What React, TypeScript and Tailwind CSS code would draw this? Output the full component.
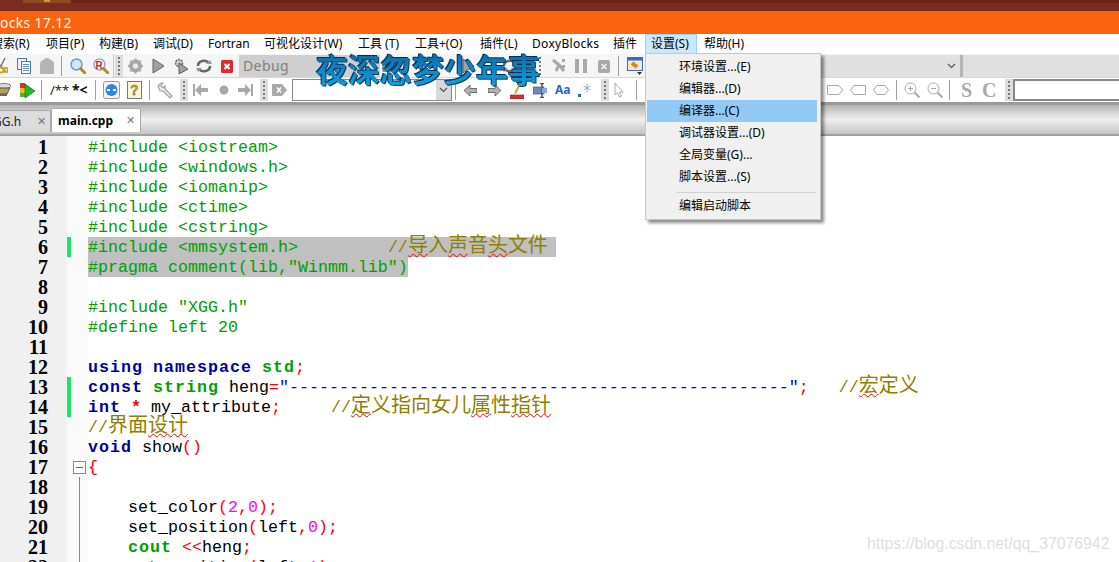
import React from "react";

const UI = "font-['Noto_Sans','Noto_Sans_CJK_SC',sans-serif]";
const CODE = "font-['Liberation_Mono','Noto_Sans_CJK_SC',monospace]";
const CJK = "font-['Noto_Sans_CJK_SC',sans-serif]";

type P = { children?: React.ReactNode };
const G = ({ children }: P) => <span className="text-[#00a000]">{children}</span>;
const K = ({ children }: P) => <b className="font-bold tracking-[1px] text-[#00009f]">{children}</b>;
const T = ({ children }: P) => <b className="font-bold tracking-[1px] text-[#00a000]">{children}</b>;
const R = ({ children }: P) => <span className="text-[#ff0000]">{children}</span>;
const N = ({ children }: P) => <span className="text-[#ff00ff]">{children}</span>;
const S = ({ children }: P) => <span className="text-[#0000ff]">{children}</span>;
const C = ({ children }: P) => <span className="text-[#8f8000]">{children}</span>;
const H = ({ children }: P) => <span className={`${CJK} text-[20px] leading-[0]`}>{children}</span>;
const W = ({ children }: P) => (
  <span className={`${CJK} text-[20px] leading-[0] underline decoration-wavy decoration-[#ff0000] decoration-1 underline-offset-1`}>{children}</span>
);

const lines: React.ReactNode[] = [
  <G>#include &lt;iostream&gt;</G>,
  <G>#include &lt;windows.h&gt;</G>,
  <G>#include &lt;iomanip&gt;</G>,
  <G>#include &lt;ctime&gt;</G>,
  <G>#include &lt;cstring&gt;</G>,
  <span className="inline-block h-[20px] w-[468px] bg-[#c0c0c0] align-top">
    <G>#include &lt;mmsystem.h&gt;</G>{"         "}
    <C>//<W>导</W><H>入</H><W>声</W><H>音</H><W>头</W><H>文件</H></C>
  </span>,
  <span className="inline-block h-[20px] w-[320px] bg-[#c0c0c0] align-top">
    <G>#pragma comment(lib,"Winmm.lib")</G>
  </span>,
  "",
  <G>#include "XGG.h"</G>,
  <G>#define left 20</G>,
  "",
  <><K>using</K> <K>namespace</K> <T>std</T><R>;</R></>,
  <><K>const</K> <T>string</T> heng<R>=</R><S>"{"-".repeat(50)}"</S><R>;</R>{"   "}<C>//<W>宏</W><H>定义</H></C></>,
  <><K>int</K> <R><b>*</b></R> my_attribute<R>;</R>{"     "}<C>//<W>定</W><H>义指向女儿</H><W>属</W><H>性</H><W>指针</W></C></>,
  <C>//<H>界面</H><W>设计</W></C>,
  <><K>void</K> show<R>()</R></>,
  <R>{"{"}</R>,
  "",
  <>{"    "}set_color<R>(</R><N>2</N><R>,</R><N>0</N><R>);</R></>,
  <>{"    "}set_position<R>(</R>left<R>,</R><N>0</N><R>);</R></>,
  <>{"    "}<T>cout</T> <R>&lt;&lt;</R>heng<R>;</R></>,
  <>{"    "}set_position<R>(</R>left<R>,</R><N>1</N><R>);</R></>,
];

const changed = [6, 13, 14];

const menus: [string, string][] = [
  ["搜索(R)", "w-[55px] -ml-[9px]"],
  ["项目(P)", "w-[53px]"],
  ["构建(B)", "w-[54px]"],
  ["调试(D)", "w-[55px]"],
  ["Fortran", "w-[56px]"],
  ["可视化设计(W)", "w-[94px]"],
  ["工具 (T)", "w-[57px]"],
  ["工具+(O)", "w-[65px]"],
  ["插件(L)", "w-[52px]"],
  ["DoxyBlocks", "w-[81px] tracking-[0.3px]"],
  ["插件", "w-[32px]"],
];

const dropdown = ["环境设置...(E)", "编辑器...(D)", "编译器...(C)", "调试器设置...(D)", "全局变量(G)...", "脚本设置...(S)"];

const Sep = ({ className = "" }: { className?: string }) => <div className={`w-px h-[20px] bg-[#a0a0a0] shrink-0 ${className}`} />;

const Grip = ({ className = "" }: { className?: string }) => (
  <div className={`w-[8px] h-[22px] bg-[#dcdcdc] shrink-0 flex flex-col items-center justify-center gap-[2px] ${className}`}>
    {[0, 1, 2, 3, 4].map((i) => (
      <div key={i} className="w-[2px] h-[2px] bg-[#777]" />
    ))}
  </div>
);

type I = { className?: string };
const Box = ({ w, h = 16, className = "", children }: { w: number; h?: number; className?: string; children: React.ReactNode }) => (
  <svg width={w} height={h} viewBox={`0 0 ${w} ${h}`} className={`shrink-0 ${className}`}>{children}</svg>
);

const Scissors = ({ className }: I) => (
  <Box w={8} className={className}>
    <path d="M5 0 L1 8 M0 7 L6 14" stroke="#777" strokeWidth="1.5" fill="none" />
    <circle cx="1" cy="12" r="2.5" fill="none" stroke="#c9a227" strokeWidth="2" />
    <circle cx="6" cy="12" r="2" fill="none" stroke="#c9a227" strokeWidth="2" />
  </Box>
);
const Copy = ({ className }: I) => (
  <Box w={14} className={className}>
    <rect x="0.5" y="0.5" width="9" height="11" fill="#eaf2fb" stroke="#4a78b0" />
    <rect x="4.5" y="3.5" width="9" height="12" fill="#fff" stroke="#4a78b0" />
    <path d="M6 6.5h6M6 8.5h6M6 10.5h6M6 12.5h6" stroke="#5c8cc4" />
  </Box>
);
const PasteOff = ({ className }: I) => (
  <Box w={14} className={className}>
    <path d="M0 16 V6 Q0 3 3 2 Q5 0 7 0 Q9 0 11 2 Q14 3 14 6 V16Z" fill="#b4b4b4" />
  </Box>
);
const Find = ({ className, r }: I & { r?: boolean }) => (
  <Box w={16} className={className}>
    <circle cx="6.5" cy="6.5" r="5.5" fill={r ? "#fff" : "#cfe6f7"} stroke={r ? "#9aa8b5" : "#6f9ec4"} strokeWidth="1.5" />
    <path d="M10.5 10.5 L15 15" stroke="#b08a2a" strokeWidth="3" strokeLinecap="round" />
    {r && <text x="2.5" y="10.5" fontSize="10" fontWeight="700" fill="#c8283c" fontFamily="Liberation Sans">R</text>}
  </Box>
);
const Gear = ({ className }: I) => (
  <Box w={15} className={className}>
    <circle cx="7.5" cy="8" r="4.5" fill="none" stroke="#a8a8a8" strokeWidth="4" />
    <path d="M7.5 0.5v3M7.5 12.5v3M0 8h3M12 8h3M2.2 2.7l2 2M10.8 11.3l2 2M12.8 2.7l-2 2M4.2 11.3l-2 2" stroke="#a8a8a8" strokeWidth="2" />
    <circle cx="7.5" cy="8" r="2" fill="#e8e8e8" />
  </Box>
);
const Play = ({ className }: I) => (
  <Box w={13} className={className}>
    <path d="M1 1 L12 8 L1 15Z" fill="#a0a0a0" stroke="#606060" />
  </Box>
);
const Debug = ({ className }: I) => (
  <Box w={15} className={className}>
    <circle cx="5" cy="5" r="3.5" fill="#ccc" stroke="#666" strokeDasharray="2 1" strokeWidth="1.5" />
    <path d="M5 5 L14 11 L5 16Z" fill="#a0a0a0" stroke="#606060" />
  </Box>
);
const Rebuild = ({ className }: I) => (
  <Box w={16} className={className}>
    <path d="M2 8 A6 5 0 0 1 13 5" fill="none" stroke="#666" strokeWidth="2.5" />
    <path d="M14 8 A6 5 0 0 1 3 11" fill="none" stroke="#666" strokeWidth="2.5" />
    <path d="M10 6 L16 6 L14 2Z M6 10 L0 10 L2 14Z" fill="#999" />
  </Box>
);
const Abort = ({ className }: I) => (
  <Box w={12} h={13} className={className}>
    <rect width="12" height="13" rx="1.5" fill="#de2a2a" />
    <path d="M3.5 4 L8.5 9 M8.5 4 L3.5 9" stroke="#fff" strokeWidth="2" />
  </Box>
);
const SmallBox = ({ className }: I) => (
  <Box w={12} h={12} className={className}><rect x="1" y="1" width="10" height="10" fill="#fff" stroke="#444" /></Box>
);
const Step = ({ className }: I) => (
  <Box w={13} className={className}>
    <path d="M1 2 L7 7 L4 13 M7 7 L12 13" fill="none" stroke="#a8a8a8" strokeWidth="3" />
    <path d="M10 1h3v3h-3zM10 7h3v3h-3z" fill="#a8a8a8" />
  </Box>
);
const Pause = ({ className }: I) => (
  <Box w={12} h={14} className={className}><path d="M0 0h4v14H0zM8 0h4v14H8z" fill="#a8a8a8" /></Box>
);
const StopOff = ({ className }: I) => (
  <Box w={12} h={13} className={className}>
    <rect width="12" height="13" rx="2" fill="#a8a8a8" />
    <path d="M3.5 4 L8.5 9 M8.5 4 L3.5 9" stroke="#f4f4f4" strokeWidth="1.5" />
  </Box>
);
const TargetIcon = ({ className }: I) => (
  <Box w={16} h={18} className={className}>
    <rect x="0.5" y="0.5" width="15" height="13" fill="#f6e6c8" stroke="#3a6cc0" />
    <rect x="0.5" y="0.5" width="15" height="3" fill="#2f6cd0" />
    <path d="M5 6 L10 10" stroke="#d88420" strokeWidth="4" />
    <path d="M10 15h5l-2.5 3z" fill="#333" />
  </Box>
);
const Pot = ({ className }: I) => (
  <Box w={11} className={className}>
    <ellipse cx="4" cy="4" rx="7" ry="2.5" fill="#ddd" stroke="#777" />
    <path d="M-3 6 H10 L7 12 H0Z" fill="#b8a050" stroke="#555" />
    <path d="M0 13h7" stroke="#666" strokeWidth="2" />
  </Box>
);
const FlagGo = ({ className }: I) => (
  <Box w={15} className={className}>
    <rect x="0" y="1" width="5" height="5" fill="#e03030" />
    <rect x="0" y="6" width="5" height="5" fill="#e8c020" />
    <rect x="0" y="11" width="5" height="4" fill="#50b030" />
    <path d="M5 2 L15 9 L5 16Z" fill="#22b822" stroke="#107010" strokeWidth="0.7" />
  </Box>
);
const BlueBtn = ({ className }: I) => (
  <Box w={17} h={18} className={className}>
    <rect x="0.5" y="0.5" width="16" height="17" rx="2" fill="#f2f2f2" stroke="#999" />
    <circle cx="8.5" cy="9" r="6" fill="#2e86de" />
    <path d="M4 9h3M10 9h3" stroke="#fff" strokeWidth="2" />
  </Box>
);
const Help = ({ className }: I) => (
  <Box w={15} h={18} className={className}>
    <rect x="0.5" y="0.5" width="14" height="17" fill="#fbf6d8" stroke="#777" />
    <text x="3" y="14" fontSize="14" fontWeight="700" fill="#c9b010" stroke="#555" strokeWidth="0.4" fontFamily="Liberation Sans">?</text>
  </Box>
);
const Wrench = ({ className }: I) => (
  <Box w={17} h={17} className={className}>
    <path d="M1 4 L4 1 L6 1 L4 4 L6 6 L8 4 L8 7 L15 14 L13 16 L6 9 L3 9Z" fill="#ededed" stroke="#a0a0a0" strokeWidth="1.2" />
  </Box>
);
const ArrowBar = ({ className, flip }: I & { flip?: boolean }) => (
  <Box w={15} h={14} className={className}>
    <path d={flip ? "M0 5h7V1l6 6-6 6V9H0zM13 1h2v12h-2z" : "M15 5H8V1L2 7l6 6V9h7zM0 1h2v12H0z"} fill="#a8a8a8" />
  </Box>
);
const Dot = ({ className }: I) => (
  <Box w={10} h={10} className={className}><circle cx="5" cy="5" r="4.5" fill="#a8a8a8" /></Box>
);
const Tag = ({ className }: I) => (
  <Box w={15} h={14} className={className}>
    <path d="M0 1h10l5 6-5 6H0z" fill="#a8a8a8" />
    <path d="M5 4.5 L9 9.5 M9 4.5 L5 9.5" stroke="#fff" strokeWidth="1.5" />
  </Box>
);
const Nav = ({ className, flip }: I & { flip?: boolean }) => (
  <Box w={13} h={11} className={className}>
    <path d={flip ? "M0 3.5h7V0l6 5.5-6 5.5V7.5H0z" : "M13 3.5H6V0L0 5.5 6 11V7.5h7z"} fill="#b0b0b0" stroke="#555" strokeWidth="0.8" />
  </Box>
);
const Pencil = ({ className }: I) => (
  <Box w={14} h={18} className={className}>
    <path d="M12 0 L7 10 L5 13 L6 9 L11 0Z" fill="#f0c020" stroke="#a08010" strokeWidth="0.6" />
    <rect x="0" y="14" width="14" height="4" fill="#d83030" stroke="#902020" strokeWidth="0.6" />
  </Box>
);
const Cursor = ({ className }: I) => (
  <Box w={14} h={15} className={className}>
    <rect x="0" y="4" width="11" height="7" fill="#6a8cc0" stroke="#445" strokeWidth="0.6" />
    <path d="M7 0.5h4M7 14.5h4M9 0.5v14" stroke="#555" strokeWidth="1.5" />
    <rect x="9" y="5" width="5" height="5" fill="#88a8d8" />
  </Box>
);
const Aa = ({ className }: I) => (
  <span className={`w-[15px] shrink-0 text-[12px] leading-none font-bold text-[#2a68c0] ${UI} ${className}`}>Aa</span>
);
const Regex = ({ className }: I) => (
  <Box w={13} h={14} className={className}>
    <rect x="0" y="11" width="3" height="3" fill="#2a68c0" />
    <path d="M9 1v8M5.5 3l7 4M12.5 3l-7 4" stroke="#8aa8d0" strokeWidth="1" />
  </Box>
);
const Arrow = ({ className }: I) => (
  <Box w={10} h={16} className={className}>
    <path d="M1 1 V13 L3.5 10.5 L5.5 15 L7.5 14 L5.5 10 L9 10Z" fill="#fff" stroke="#aaa" />
  </Box>
);
const Shape = ({ className, d }: I & { d: string }) => (
  <Box w={16} h={10} className={className}><path d={d} fill="#fff" stroke="#a8a8a8" /></Box>
);
const Zoom = ({ className, plus }: I & { plus?: boolean }) => (
  <Box w={16} className={className}>
    <circle cx="6.5" cy="6.5" r="5.5" fill="#fff" stroke="#a8a8a8" />
    <path d={plus ? "M4 6.5h5M6.5 4v5" : "M4 6.5h5"} stroke="#a8a8a8" />
    <path d="M10.5 10.5 L15.5 15.5" stroke="#a8a8a8" strokeWidth="2" />
  </Box>
);
const Chevron = () => (
  <svg width="9" height="6" viewBox="0 0 9 6"><path d="M1 1 L4.5 4.5 L8 1" fill="none" stroke="#555" strokeWidth="1.2" /></svg>
);

export default function App() {
  return (
    <div className={`relative w-[1119px] h-[562px] overflow-hidden bg-white ${UI}`}>
      {/* window chrome */}
      <div className="h-[11px] bg-[#7b2c1d] flex items-start">
        <div className="ml-[23px] w-[48px] h-[3px] bg-[#8f4a1f] flex justify-center"><div className="w-[6px] h-[2px] bg-[#c9a227]" /></div>
        <div className="flex-1 h-[3px] bg-[#6b2416]" />
      </div>
      <div className="h-[23px] bg-[#fb640f] text-[14px] leading-[23px] text-[#fff3e8] tracking-[0.3px] whitespace-nowrap">ocks 17.12</div>

      {/* menu bar */}
      <div className="h-[20px] bg-white flex items-center text-[12px] leading-[20px] text-black whitespace-nowrap">
        {menus.map(([m, c], i) => (
          <div key={i} className={`shrink-0 ${c}`}>{m}</div>
        ))}
        <div className="shrink-0 w-[52px] h-[20px] -mt-px px-[5px] bg-[#cce8ff] border border-[#99d1ff] leading-[18px]">设置(S)</div>
        <div className="shrink-0 ml-[7px]">帮助(H)</div>
      </div>

      {/* toolbar 1 */}
      <div className="h-[24px] bg-[#f5f5f5] border-b border-[#d8d8d8] flex items-center pt-px">
        <Scissors />
        <Copy className="ml-[9px]" />
        <PasteOff className="ml-[9px]" />
        <Sep className="ml-[7px]" />
        <Find className="ml-[8px]" />
        <Find r className="ml-[7px]" />
        <div className="ml-[4px] w-px h-[24px] bg-[#c8c8c8] shrink-0" />
        <Grip className="ml-px" />
        <Gear className="ml-[5px]" />
        <Play className="ml-[9px]" />
        <Debug className="ml-[9px]" />
        <Rebuild className="ml-[7px]" />
        <Abort className="ml-[9px]" />
        <div className="ml-[6px] w-[141px] h-[22px] bg-[#cfcfcf] shrink-0 pl-[4px] text-[14px] leading-[22px] tracking-[0.4px] text-[#808080]">Debug</div>
        <SmallBox className="ml-[2px]" />
        <Play className="ml-[68px]" />
        <Rebuild className="ml-[27px]" />
        <Grip className="ml-[18px] bg-transparent" />
        <Step className="ml-[8px]" />
        <Pause className="ml-[10px]" />
        <StopOff className="ml-[11px]" />
        <Sep className="ml-[8px]" />
        <TargetIcon className="ml-[8px]" />
        <div className="ml-[178px] w-[139px] h-[22px] bg-[#e0e0e0] shrink-0 flex items-center justify-end pr-[4px]"><Chevron /></div>
        <div className="w-[3px] h-[22px] bg-[#b4b4b4] shrink-0" />
        <div className="flex-1 h-[22px] bg-[#e0e0e0]" />
      </div>

      {/* toolbar 2 */}
      <div className="h-[24px] bg-white flex items-center">
        <Pot />
        <FlagGo className="ml-[9px]" />
        <Sep className="ml-[6px]" />
        <span className="ml-[8px] w-[16px] shrink-0 text-[13px] leading-none text-[#222]">/**</span>
        <span className="ml-[6px] w-[18px] shrink-0 text-[14px] leading-none font-bold text-[#111]">*&lt;</span>
        <Sep className="ml-[5px]" />
        <BlueBtn className="ml-[7px]" />
        <Help className="ml-[7px]" />
        <Sep className="ml-[7px]" />
        <Wrench className="ml-[7px]" />
        <Grip className="ml-[6px]" />
        <ArrowBar className="ml-[5px]" />
        <Dot className="ml-[11px]" />
        <ArrowBar flip className="ml-[9px]" />
        <Grip className="ml-[7px]" />
        <Tag className="ml-[4px]" />
        <div className="ml-[5px] w-[160px] h-[22px] border border-[#888] bg-white shrink-0 flex justify-end">
          <div className="w-[15px] bg-[#d8d8d8] flex items-center justify-center"><Chevron /></div>
        </div>
        <Sep className="ml-[3px]" />
        <Nav className="ml-[8px]" />
        <Nav flip className="ml-[11px]" />
        <Pencil className="ml-[9px]" />
        <Cursor className="ml-[9px]" />
        <Aa className="ml-[8px]" />
        <Regex className="ml-[8px]" />
        <Grip className="ml-[10px]" />
        <Arrow className="ml-[5px]" />
        <Sep className="ml-[12px]" />
        <Shape className="ml-[190px]" d="M0.5 0.5H12L15.5 5L12 9.5H0.5Z" />
        <Shape className="ml-[7px]" d="M15.5 0.5H4L0.5 5L4 9.5H15.5Z" />
        <Shape className="ml-[7px]" d="M4 0.5H12L15.5 5L12 9.5H4L0.5 5Z" />
        <Sep className="ml-[7px]" />
        <Zoom plus className="ml-[7px]" />
        <Zoom className="ml-[7px]" />
        <Sep className="ml-[6px]" />
        <span className="ml-[11px] w-[12px] shrink-0 font-['Liberation_Serif',serif] font-bold text-[20px] leading-none text-[#a8a8a8]">S</span>
        <span className="ml-[9px] w-[15px] shrink-0 font-['Liberation_Serif',serif] font-bold text-[20px] leading-none text-[#a8a8a8]">C</span>
        <Grip className="ml-[8px]" />
        <div className="flex-1 h-[22px] border-2 border-r-0 border-[#888] bg-white" />
      </div>

      {/* tab strip */}
      <div className="h-[32px] border-t-[3px] border-[#9a9a9a] bg-gradient-to-b from-[#b4b4b4] via-[#f0f0f0] to-[#c4c4c4] flex items-end pb-[2px]">
        <div className="w-[51px] h-[22px] bg-[#dcdcdc] border-t border-r border-[#aaa] rounded-tr-[2px] flex items-center text-[12px] text-[#222] shrink-0 overflow-hidden">
          <span className="-ml-[7px]">GG.h</span>
          <span className="ml-[16px] text-[#777] text-[11px]">✕</span>
        </div>
        <div className="w-[90px] h-[24px] bg-white border-t border-x border-[#aaa] rounded-t-[2px] flex items-center pl-[6px] text-[12px] font-bold text-black shrink-0 whitespace-nowrap">
          main.cpp
          <span className="ml-[13px] font-normal text-[#777] text-[11px]">✕</span>
        </div>
      </div>
      <div className="h-[2px] bg-[#a0a0a0]" />

      {/* editor */}
      <div className="relative flex h-[426px] overflow-hidden">
        <div className="w-[67px] bg-[#f0f0f0] shrink-0 pt-px">
          {lines.map((_, i) => (
            <div key={i} className="h-[20px] pr-[19px] text-right font-['Liberation_Serif',serif] font-bold text-[20px] leading-[20px] text-black">{i + 1}</div>
          ))}
        </div>
        <div className="relative w-[21px] bg-[#fafafa] shrink-0 pt-px">
          {lines.map((_, i) => (
            <div key={i} className="relative h-[20px]">
              {changed.includes(i + 1) && <div className="w-[4px] h-[20px] bg-[#1ee36b]" />}
              {i + 1 === 17 && (
                <div className="absolute left-[6px] top-[4px] w-[13px] h-[13px] border border-[#888] bg-white flex items-center justify-center">
                  <div className="w-[7px] h-px bg-[#666]" />
                </div>
              )}
              {i + 1 > 17 && <div className="absolute left-[12px] top-0 w-px h-[20px] bg-[#888]" />}
            </div>
          ))}
        </div>
        <div className={`flex-1 pt-px text-[16.67px] leading-[22px] text-black whitespace-pre ${CODE}`}>
          {lines.map((l, i) => (
            <div key={i} className="h-[20px]">{l}</div>
          ))}
        </div>
      </div>

      {/* overlays */}
      <div className={`absolute left-[316px] top-[50px] text-[32px] leading-[36px] font-bold whitespace-nowrap [filter:drop-shadow(-1px_-1px_0_#0a2f50)_drop-shadow(1px_1px_0_#0a3f60)] ${CJK}`}>
        <span className="bg-gradient-to-b from-[#0a5f9e] to-[#12a8ea] bg-clip-text text-transparent">夜深忽梦少年事</span>
      </div>

      <div className="absolute left-[645px] top-[53px] w-[176px] h-[167px] bg-[#f0f0f0] border border-[#c8c8c8] shadow-[3px_3px_3px_rgba(0,0,0,0.45)] pt-[2px] px-px text-[12px] text-black">
        {dropdown.map((d, i) => (
          <div key={i} className={`h-[22px] leading-[22px] pl-[32px] w-[170px] ${i === 2 ? "bg-[#91c9f7]" : ""}`}>{d}</div>
        ))}
        <div className="h-px ml-[30px] mr-[3px] mt-[4px] mb-[2px] bg-[#d0d0d0]" />
        <div className="h-[22px] leading-[22px] pl-[32px]">编辑启动脚本</div>
      </div>

      <div className="absolute left-[867px] top-[534px] font-['Liberation_Sans',sans-serif] text-[15.8px] leading-[20px] text-[#dedede] whitespace-nowrap">
        https://blog.csdn.net/qq_37076942
      </div>
    </div>
  );
}
